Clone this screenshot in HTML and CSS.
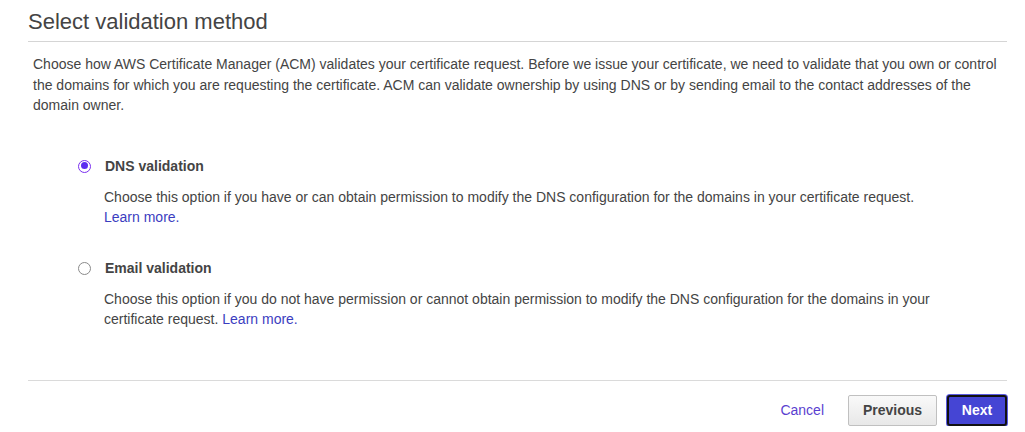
FILE: index.html
```html
<!DOCTYPE html>
<html>
<head>
<meta charset="utf-8">
<link rel="stylesheet" href="styles.css">
</head>
<body>
<div class="page">
  <h1 class="title">Select validation method</h1>
  <p class="intro">Choose how AWS Certificate Manager (ACM) validates your certificate request. Before we issue your certificate, we need to validate that you own or control the domains for which you are requesting the certificate. ACM can validate ownership by using DNS or by sending email to the contact addresses of the domain owner.</p>
  <div class="options">
    <div class="option">
      <span class="radio checked"></span>
      <div class="option-body">
        <div class="option-label">DNS validation</div>
        <div class="option-desc">Choose this option if you have or can obtain permission to modify the DNS configuration for the domains in your certificate request.<br><a class="link" href="#">Learn more.</a></div>
      </div>
    </div>
    <div class="option">
      <span class="radio"></span>
      <div class="option-body">
        <div class="option-label">Email validation</div>
        <div class="option-desc">Choose this option if you do not have permission or cannot obtain permission to modify the DNS configuration for the domains in your certificate request. <a class="link" href="#">Learn more.</a></div>
      </div>
    </div>
  </div>
  <div class="footer">
    <a class="cancel" href="#">Cancel</a>
    <button class="btn btn-secondary">Previous</button>
    <button class="btn btn-primary">Next</button>
  </div>
</div>
</body>
</html>
```
FILE: styles.css
```css
html, body {
  margin: 0;
  padding: 0;
  background: #fff;
}
body {
  font-family: "Liberation Sans", Arial, sans-serif;
  color: #444;
}
.page {
  padding: 0 18px 0 28px;
}
.title {
  margin: 0;
  padding-top: 8px;
  font-size: 22px;
  font-weight: normal;
  line-height: 28px;
  color: #444;
  padding-bottom: 5px;
  border-bottom: 1px solid #d5d5d5;
}
.intro {
  margin: 0;
  padding: 12px 0 0 5px;
  font-size: 14px;
  line-height: 20.5px;
}
.options {
  padding: 42px 0 0 50px;
}
.option {
  display: flex;
  align-items: flex-start;
  margin-bottom: 32px;
}
.option:last-child {
  margin-bottom: 0;
}
.radio {
  flex: none;
  box-sizing: border-box;
  width: 13px;
  height: 13px;
  border: 1px solid #8a8a8a;
  border-radius: 50%;
  margin: 2px 13px 0 0;
  position: relative;
}
.radio.checked {
  border: 1.5px solid #7a2ef0;
}
.radio.checked::after {
  content: "";
  position: absolute;
  left: 1.5px;
  top: 1.5px;
  width: 7px;
  height: 7px;
  border-radius: 50%;
  background: #5c2cf0;
}
.option-body {
  font-size: 14px;
}
.option-label {
  font-weight: bold;
  line-height: 17px;
  color: #444;
  padding-left: 1px;
}
.option-desc {
  margin-top: 12px;
  line-height: 20.5px;
  max-width: 840px;
}
.link {
  color: #3b3dbf;
  text-decoration: none;
}
.footer {
  margin-top: 50px;
  border-top: 1px solid #dadada;
  display: flex;
  justify-content: flex-end;
  align-items: center;
  padding-top: 14px;
}
.cancel {
  color: #5a3fd0;
  text-decoration: none;
  font-size: 14px;
  margin-right: 24px;
}
.btn {
  font-family: "Liberation Sans", Arial, sans-serif;
  font-size: 14px;
  font-weight: bold;
  height: 31px;
  border-radius: 2px;
  cursor: pointer;
}
.btn-secondary {
  width: 89px;
  color: #444;
  background: linear-gradient(#f9f9f9, #e8e8e8);
  border: 1px solid #c0c0c0;
  margin-right: 10px;
}
.btn-primary {
  width: 60px;
  color: #fff;
  background: #4545d4;
  border: 2px solid #111;
  box-shadow: 0 0 0 1px #5a5ae0;
  border-radius: 3px;
}
```
